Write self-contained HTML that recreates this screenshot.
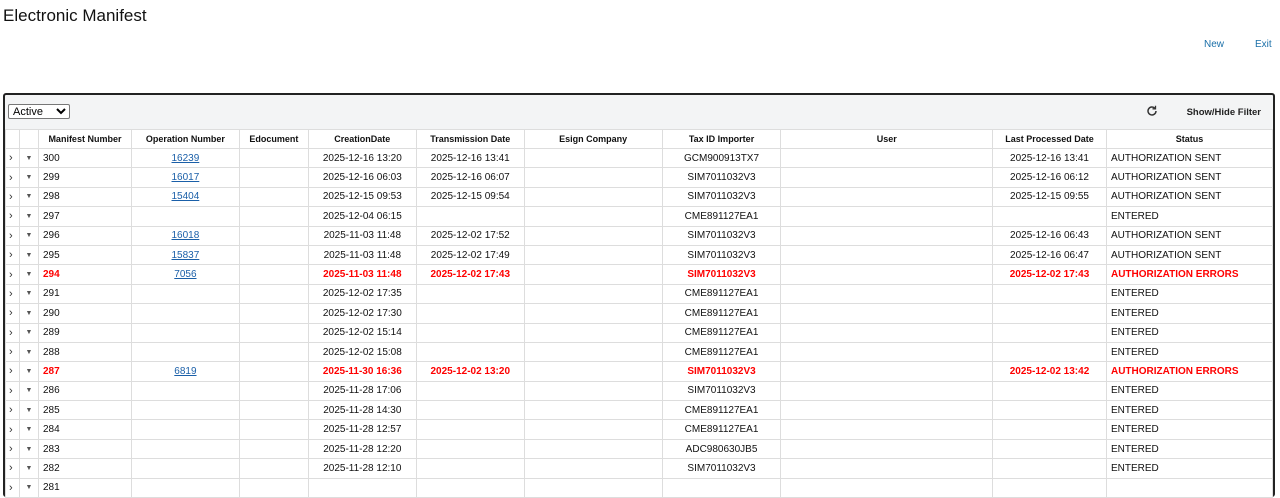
<!DOCTYPE html>
<html><head><meta charset="utf-8"><style>
body{margin:0;width:1280px;height:479px;overflow:hidden;background:#fff;font-family:"Liberation Sans",Arial,sans-serif;}
h1{position:absolute;left:3px;top:6px;margin:0;font-weight:normal;font-size:17px;color:#111;}
.lnk{position:absolute;top:39px;font-size:10px;color:#1a6fa8;}
.box{position:absolute;left:3px;top:93px;width:1268px;height:400px;border:2px solid #222;border-radius:3px;background:#f3f4f5;}
.bar{height:34px;position:relative;}
select{position:absolute;left:3px;top:9px;width:62px;height:15px;font-size:11px;font-family:"Liberation Sans",sans-serif;border:1px solid #777;border-radius:2px;padding:0;background:#fff;}
.sh{position:absolute;right:12px;top:12px;font-size:9.5px;font-weight:bold;color:#222;}
.rf{position:absolute;left:1141px;top:10px;}
table{border-collapse:collapse;table-layout:fixed;background:#fff;font-size:10px;color:#111;}
td,th{border:1px solid #ddd;height:18.4px;padding:0 4px;white-space:nowrap;overflow:hidden;}
th{font-size:9px;font-weight:bold;height:18px;}
td.c{text-align:center}
tr.r td{color:#f00;font-weight:bold}
a{color:#1a5fa8;text-decoration:underline}
tr.r a{font-weight:normal}
tr td.ar{font-size:11px;text-align:left;padding:0 3px;color:#333!important;font-weight:normal!important}
tr td.dn{font-size:7px;text-align:center;color:#555!important;font-weight:normal!important}
</style></head><body>
<h1>Electronic Manifest</h1>
<span class="lnk" style="left:1204px">New</span>
<span class="lnk" style="left:1255px">Exit</span>
<div class="box">
<div class="bar"><select><option>Active</option></select>
<svg class="rf" width="12" height="12" viewBox="0 0 12 12"><path d="M10 6a4 4 0 1 1-1.2-2.9" fill="none" stroke="#333" stroke-width="1.5"/><path d="M9.5 0.8v3h-3" fill="none" stroke="#333" stroke-width="1.3"/></svg>
<span class="sh">Show/Hide Filter</span></div>
<table>
<colgroup><col style="width:14px"><col style="width:19px"><col style="width:93px"><col style="width:108px"><col style="width:69px"><col style="width:108px"><col style="width:108px"><col style="width:138px"><col style="width:119px"><col style="width:212px"><col style="width:114px"><col style="width:166px"></colgroup>
<tr><th></th><th></th><th>Manifest Number</th><th>Operation Number</th><th>Edocument</th><th>CreationDate</th><th>Transmission Date</th><th>Esign Company</th><th>Tax ID Importer</th><th>User</th><th>Last Processed Date</th><th>Status</th></tr>
<tr><td class="ar">›</td><td class="dn">▼</td><td>300</td><td class="c"><a>16239</a></td><td></td><td class="c">2025-12-16 13:20</td><td class="c">2025-12-16 13:41</td><td></td><td class="c">GCM900913TX7</td><td></td><td class="c">2025-12-16 13:41</td><td>AUTHORIZATION SENT</td></tr>
<tr><td class="ar">›</td><td class="dn">▼</td><td>299</td><td class="c"><a>16017</a></td><td></td><td class="c">2025-12-16 06:03</td><td class="c">2025-12-16 06:07</td><td></td><td class="c">SIM7011032V3</td><td></td><td class="c">2025-12-16 06:12</td><td>AUTHORIZATION SENT</td></tr>
<tr><td class="ar">›</td><td class="dn">▼</td><td>298</td><td class="c"><a>15404</a></td><td></td><td class="c">2025-12-15 09:53</td><td class="c">2025-12-15 09:54</td><td></td><td class="c">SIM7011032V3</td><td></td><td class="c">2025-12-15 09:55</td><td>AUTHORIZATION SENT</td></tr>
<tr><td class="ar">›</td><td class="dn">▼</td><td>297</td><td></td><td></td><td class="c">2025-12-04 06:15</td><td></td><td></td><td class="c">CME891127EA1</td><td></td><td></td><td>ENTERED</td></tr>
<tr><td class="ar">›</td><td class="dn">▼</td><td>296</td><td class="c"><a>16018</a></td><td></td><td class="c">2025-11-03 11:48</td><td class="c">2025-12-02 17:52</td><td></td><td class="c">SIM7011032V3</td><td></td><td class="c">2025-12-16 06:43</td><td>AUTHORIZATION SENT</td></tr>
<tr><td class="ar">›</td><td class="dn">▼</td><td>295</td><td class="c"><a>15837</a></td><td></td><td class="c">2025-11-03 11:48</td><td class="c">2025-12-02 17:49</td><td></td><td class="c">SIM7011032V3</td><td></td><td class="c">2025-12-16 06:47</td><td>AUTHORIZATION SENT</td></tr>
<tr class="r"><td class="ar">›</td><td class="dn">▼</td><td>294</td><td class="c"><a>7056</a></td><td></td><td class="c">2025-11-03 11:48</td><td class="c">2025-12-02 17:43</td><td></td><td class="c">SIM7011032V3</td><td></td><td class="c">2025-12-02 17:43</td><td>AUTHORIZATION ERRORS</td></tr>
<tr><td class="ar">›</td><td class="dn">▼</td><td>291</td><td></td><td></td><td class="c">2025-12-02 17:35</td><td></td><td></td><td class="c">CME891127EA1</td><td></td><td></td><td>ENTERED</td></tr>
<tr><td class="ar">›</td><td class="dn">▼</td><td>290</td><td></td><td></td><td class="c">2025-12-02 17:30</td><td></td><td></td><td class="c">CME891127EA1</td><td></td><td></td><td>ENTERED</td></tr>
<tr><td class="ar">›</td><td class="dn">▼</td><td>289</td><td></td><td></td><td class="c">2025-12-02 15:14</td><td></td><td></td><td class="c">CME891127EA1</td><td></td><td></td><td>ENTERED</td></tr>
<tr><td class="ar">›</td><td class="dn">▼</td><td>288</td><td></td><td></td><td class="c">2025-12-02 15:08</td><td></td><td></td><td class="c">CME891127EA1</td><td></td><td></td><td>ENTERED</td></tr>
<tr class="r"><td class="ar">›</td><td class="dn">▼</td><td>287</td><td class="c"><a>6819</a></td><td></td><td class="c">2025-11-30 16:36</td><td class="c">2025-12-02 13:20</td><td></td><td class="c">SIM7011032V3</td><td></td><td class="c">2025-12-02 13:42</td><td>AUTHORIZATION ERRORS</td></tr>
<tr><td class="ar">›</td><td class="dn">▼</td><td>286</td><td></td><td></td><td class="c">2025-11-28 17:06</td><td></td><td></td><td class="c">SIM7011032V3</td><td></td><td></td><td>ENTERED</td></tr>
<tr><td class="ar">›</td><td class="dn">▼</td><td>285</td><td></td><td></td><td class="c">2025-11-28 14:30</td><td></td><td></td><td class="c">CME891127EA1</td><td></td><td></td><td>ENTERED</td></tr>
<tr><td class="ar">›</td><td class="dn">▼</td><td>284</td><td></td><td></td><td class="c">2025-11-28 12:57</td><td></td><td></td><td class="c">CME891127EA1</td><td></td><td></td><td>ENTERED</td></tr>
<tr><td class="ar">›</td><td class="dn">▼</td><td>283</td><td></td><td></td><td class="c">2025-11-28 12:20</td><td></td><td></td><td class="c">ADC980630JB5</td><td></td><td></td><td>ENTERED</td></tr>
<tr><td class="ar">›</td><td class="dn">▼</td><td>282</td><td></td><td></td><td class="c">2025-11-28 12:10</td><td></td><td></td><td class="c">SIM7011032V3</td><td></td><td></td><td>ENTERED</td></tr>
<tr><td class="ar">›</td><td class="dn">▼</td><td>281</td><td></td><td></td><td class="c"></td><td></td><td></td><td class="c"></td><td></td><td></td><td></td></tr>
</table>
</div>
</body></html>
